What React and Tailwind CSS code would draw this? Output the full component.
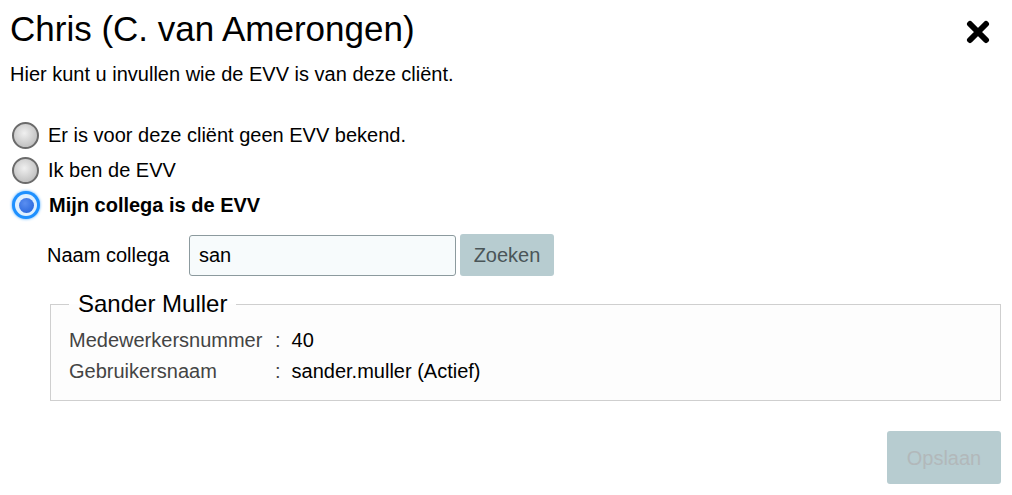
function Radio({ checked }) {
  if (checked) {
    return (
      <span className="flex h-[28px] w-[28px] shrink-0 items-center justify-center rounded-full bg-[#1e90ff] shadow-[0_0_3px_#4aa8ff]">
        <span className="flex h-[22px] w-[22px] items-center justify-center rounded-full bg-[#dff0ff]">
          <span className="h-[15px] w-[15px] rounded-full bg-[radial-gradient(circle_at_40%_35%,#5a8ef0,#1f5fd8)]" />
        </span>
      </span>
    );
  }
  return (
    <span className="h-[27px] w-[27px] shrink-0 rounded-full border-[2.5px] border-[#6b6b6b] bg-[radial-gradient(circle_at_45%_40%,#f0f0f0,#c4c4c4_70%,#a9a9a9)]" />
  );
}

export default function App() {
  const opties = [
    { label: "Er is voor deze cliënt geen EVV bekend.", checked: false },
    { label: "Ik ben de EVV", checked: false },
    { label: "Mijn collega is de EVV", checked: true },
  ];

  return (
    <div className="h-[495px] w-[1012px] bg-white font-['Liberation_Sans',Arial,sans-serif] text-black">
      <div className="flex items-start justify-between pl-[10px] pr-[22px] pt-[9px]">
        <h1 className="text-[35px] leading-[40px]">Chris (C. van Amerongen)</h1>
        <svg className="mt-[11px]" width="24" height="24" viewBox="0 0 24 24">
          <path d="M4 4 L20 20 M20 4 L4 20" stroke="#000" strokeWidth="6" strokeLinecap="round" />
        </svg>
      </div>
      <p className="mt-[13px] pl-[10px] text-[20px] leading-[24px]">
        Hier kunt u invullen wie de EVV is van deze cliënt.
      </p>

      <div className="mt-[35px] flex flex-col gap-[7px] pl-[12px]">
        {opties.map((o) => (
          <label key={o.label} className="flex h-[28px] items-center gap-[9px] text-[20px]">
            <Radio checked={o.checked} />
            <span className={o.checked ? "font-bold" : ""}>{o.label}</span>
          </label>
        ))}
      </div>

      <div className="mt-[15px] flex items-center pl-[47px]">
        <span className="w-[142px] text-[20px]">Naam collega</span>
        <input
          className="h-[41px] w-[267px] rounded-[3px] border border-[#8c9a9e] bg-[#f7fbfc] px-[9px] text-[20px] outline-none"
          defaultValue="san"
        />
        <button className="ml-[4px] h-[42px] w-[94px] rounded-[3px] bg-[#b7ccd0] text-[20px] text-[#4a5558]">
          Zoeken
        </button>
      </div>

      <fieldset className="ml-[50px] mr-[11px] mt-[16px] border border-[#cfcfcf] bg-[#fdfdfd] px-[18px] pb-[17px]">
        <legend className="px-[9px] text-[24px] leading-[24px]">Sander Muller</legend>
        <div className="mt-[12px] grid grid-cols-[206px_1fr] gap-y-[7px] text-[20px] leading-[24px]">
          <span className="text-[#444]">Medewerkersnummer</span>
          <span>
            <span className="mr-[11px] text-[#444]">:</span>40
          </span>
          <span className="text-[#444]">Gebruikersnaam</span>
          <span>
            <span className="mr-[11px] text-[#444]">:</span>sander.muller (Actief)
          </span>
        </div>
      </fieldset>

      <div className="mt-[30px] flex justify-end pr-[11px]">
        <button className="h-[53px] w-[114px] rounded-[3px] bg-[#b7ccd0] text-[20px] text-[#b2b8ba]">
          Opslaan
        </button>
      </div>
    </div>
  );
}
